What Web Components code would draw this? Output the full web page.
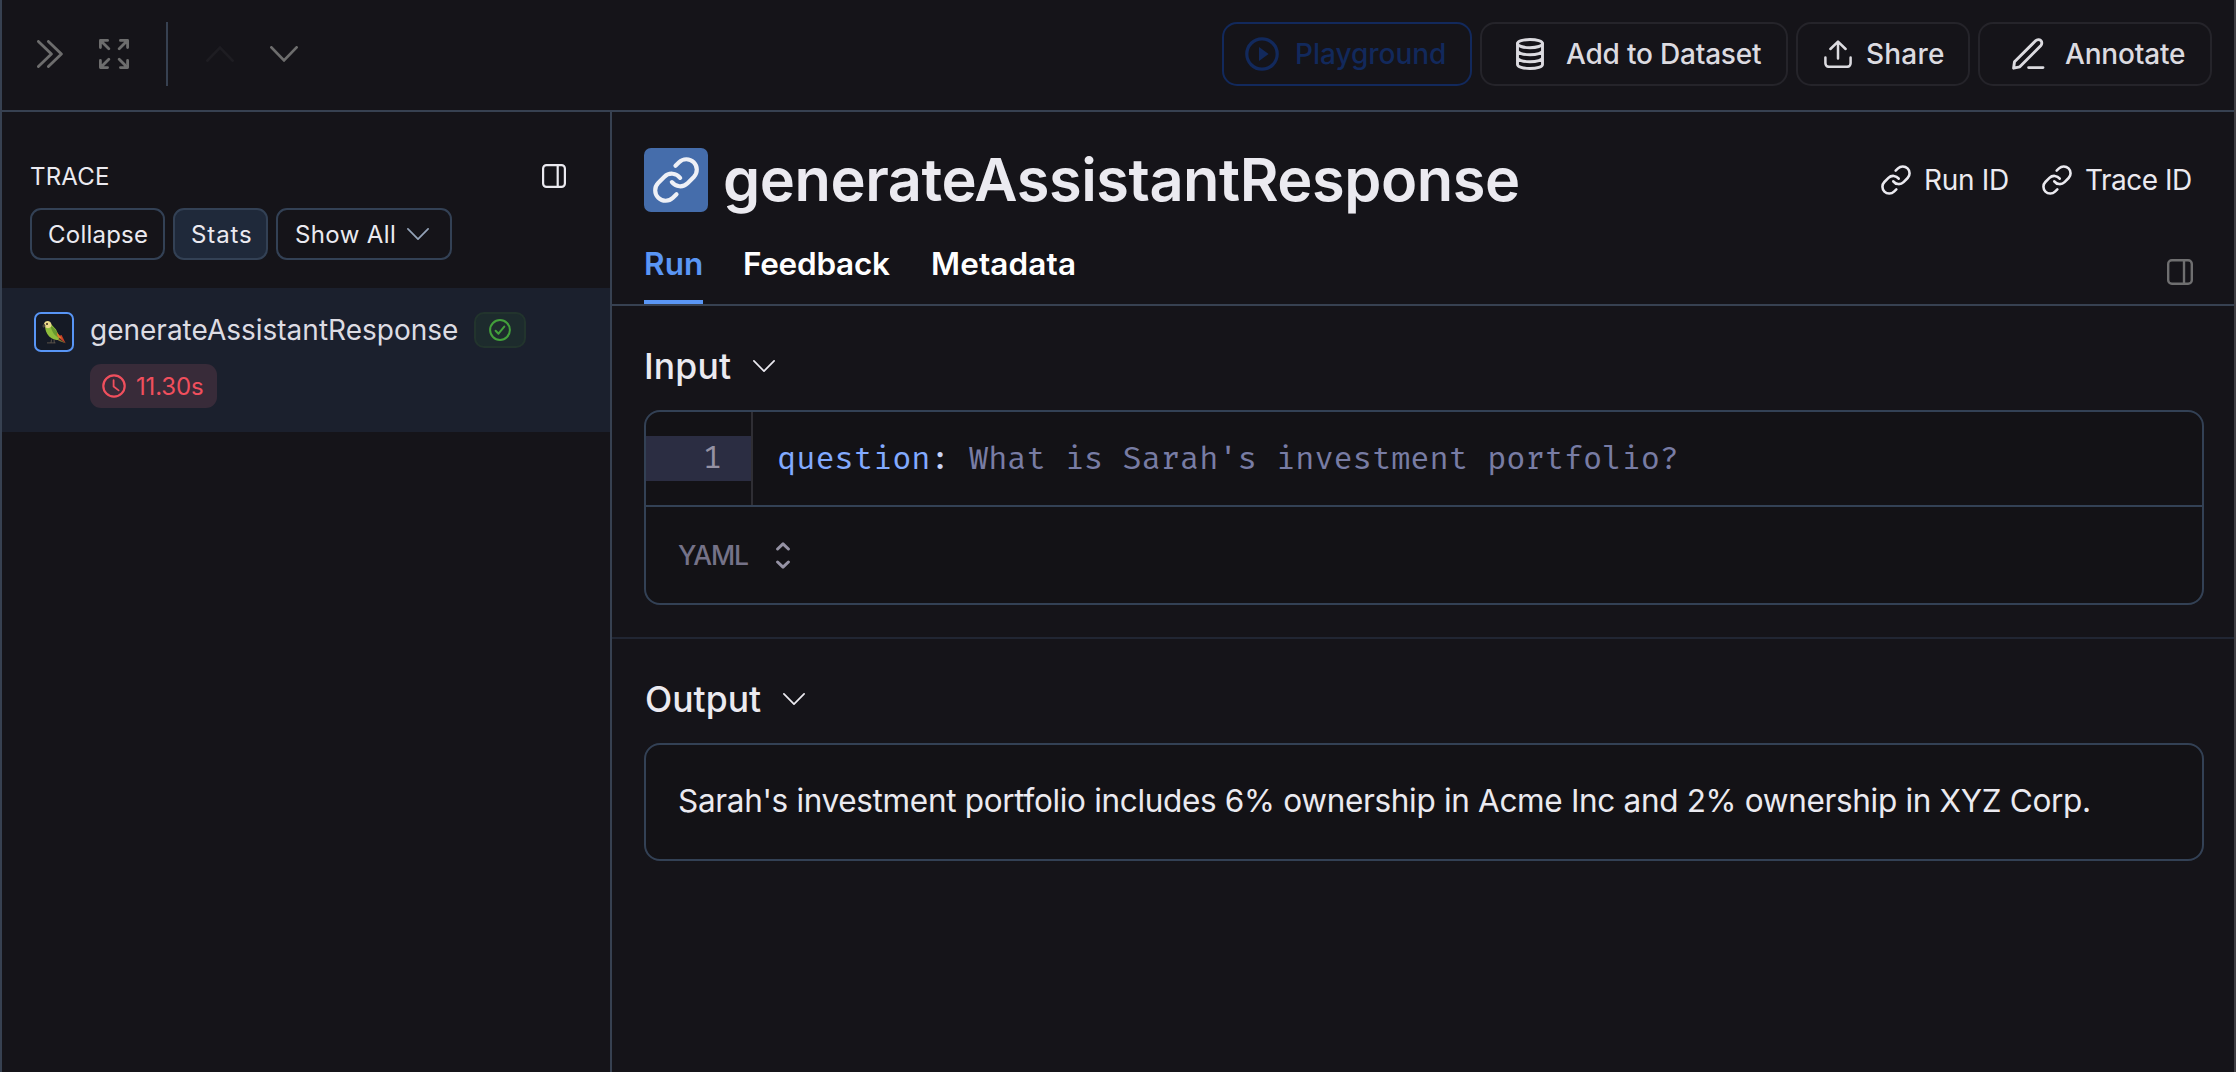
<!DOCTYPE html>
<html lang="en">
<head>
<meta charset="utf-8">
<title>Trace</title>
<style>
html,body{margin:0;height:100%;background:#151419}
body{font-family:Inter,"Liberation Sans",sans-serif;color:#ebeaf0;overflow:hidden}
</style>
</head>
<body>
<trace-app></trace-app>
<script>
const define = (name, html, setup) => {
  const t = document.createElement('template');
  t.innerHTML = html.trim();
  customElements.define(name, class extends HTMLElement {
    constructor() {
      super();
      this.attachShadow({ mode: 'open' }).append(t.content.cloneNode(true));
    }
    connectedCallback() { if (setup) setup(this, this.shadowRoot); }
  });
};

/* One line of text whose tracking is tuned so the ink spans exactly `w` pixels. */
const ctx = document.createElement('canvas').getContext('2d');
define('t-label', `<style>:host{display:block;flex:none;white-space:pre;line-height:1.2}:host([low]){padding-top:2px}</style><slot></slot>`, (el) => {
  const size = el.getAttribute('s'), weight = el.getAttribute('b') || 400, w = +el.getAttribute('w');
  const text = el.textContent;
  el.style.fontSize = size + 'px';
  el.style.fontWeight = weight;
  ctx.font = `${weight} ${size}px Inter, "Liberation Sans", sans-serif`;
  const m = ctx.measureText(text);
  const ink = m.actualBoundingBoxLeft + m.actualBoundingBoxRight;
  el.style.width = w + 'px';
  el.style.letterSpacing = (w - ink) / (text.length - 1) + 'px';
  el.style.textIndent = m.actualBoundingBoxLeft + 'px';
});

const stroke = (w, h, sw, body, vb) => `<svg width="${w}" height="${h}" viewBox="${vb || `0 0 ${w} ${h}`}" fill="none" stroke="currentColor" stroke-width="${sw}" stroke-linecap="round" stroke-linejoin="round">${body}</svg>`;
const link = (n, sw) => stroke(n, n, sw, '<path d="M10 13a5 5 0 0 0 7.54.54l3-3a5 5 0 0 0-7.07-7.07l-1.72 1.71"/><path d="M14 11a5 5 0 0 0-7.54-.54l-3 3a5 5 0 0 0 7.07 7.07l1.71-1.71"/>', '1 1 22 22');
const icons = {
  'chevrons-right': stroke(26, 28, 2.8, '<path d="M1.4 1.4 14.4 14 1.4 26.6M11.4 1.4 24.4 14 11.4 26.6"/>'),
  expand: stroke(30, 30, 2.8, '<path d="M1.4 8.6V1.4H8.6M1.8 1.8l8 8M21.4 1.4h7.2v7.2M28.2 1.8l-8 8M1.4 21.4v7.2h7.2M1.8 28.2l8-8M28.6 21.4v7.2h-7.2M28.2 28.2l-8-8"/>'),
  up: stroke(28, 16, 2.8, '<path d="M1.4 14.6 14 1.6 26.6 14.6"/>'),
  down: stroke(28, 16, 2.8, '<path d="M1.4 1.4 14 14.4 26.6 1.4"/>'),
  caret: stroke(22, 12, 1.7, '<path d="M.9 .9 11 11.2 21.1 .9"/>'),
  play: `<svg width="34" height="34" viewBox="0 0 34 34"><circle cx="17" cy="17" r="15.2" fill="none" stroke="currentColor" stroke-width="3.2"/><path d="M14 10v14l9.6-7z" fill="currentColor"/></svg>`,
  database: stroke(28, 32, 2.9, '<ellipse cx="14" cy="5.6" rx="12.5" ry="4.1"/><path d="M1.5 5.6v20.8c0 2.3 5.6 4.1 12.5 4.1s12.5-1.8 12.5-4.1V5.6M1.5 12.6c0 2.3 5.6 4.1 12.5 4.1s12.5-1.8 12.5-4.1M1.5 19.6c0 2.3 5.6 4.1 12.5 4.1s12.5-1.8 12.5-4.1"/>'),
  share: stroke(28, 28, 2.5, '<path d="M1.4 17.6v5.6a3.6 3.6 0 0 0 3.6 3.6h18a3.6 3.6 0 0 0 3.6-3.6v-5.6M14 18.6V2M6.4 9 14 1.6 21.6 9"/>'),
  pencil: stroke(33, 32, 2.9, '<path d="M16.6 29.6H31M1.6 30.2l.9-6.4L23.6 2.8c1.5-1.5 3.8-1.6 5.2-.3s1.3 3.7-.1 5.2L7.8 28.8z"/>'),
  link: link(30, 1.9),
  'link-lg': link(46, 2),
  panel: stroke(24, 24, 2.2, '<rect x="1.1" y="1.1" width="21.8" height="21.8" rx="3.4"/><path d="M15.7 1.1v21.8" stroke-linecap="butt"/>'),
  check: stroke(22, 22, 2, '<circle cx="11" cy="11" r="9.9"/><path d="M6.6 11.7 9.5 14.7 15.3 7.6"/>'),
  clock: stroke(24, 24, 2.2, '<circle cx="12" cy="12" r="10.7"/><path d="M11.6 6.2v6.3l5 3.9" stroke-width="1.8"/>'),
  updown: stroke(14, 27, 3, '<path d="M1.6 7 7 1.9 12.4 7M1.6 20 7 25.1 12.4 20"/>'),
  parrot: `<svg width="24" height="24" viewBox="0 0 24 24">
    <path d="M5 22.9h8.500M9.500 19.500l-.5 3.400M12 19.500l.3 3.400" stroke="#6b5f52" stroke-width=".8" fill="none"/>
    <path d="M15 16.500l8.600 6.800-4-8.300z" fill="#c63f26"/>
    <path d="M14 17l9.600 6.300-7-2.500z" fill="#8a7a35"/>
    <path d="M3.200 6.500C3 11 6 16.500 10 18.500c2.500 1.200 4.500 1.500 6 1.500l1.500-2.500L14 9.500 9 4z" fill="#8fbd3c"/>
    <path d="M8.500 6c3.500 1.300 5.500 4.500 7.500 7.800l3 4.500C14.500 18 10 13 8.500 6z" fill="#68982f"/>
    <path d="M15 12.500l5 6-3.500-.8c-1.300-1.500-1.800-3-1.500-5.200z" fill="#e0782c"/>
    <path d="M1.800 4.500C2.200 1.800 4.600.8 6.600 1.200 9.300 1.800 10 4.500 9 6.800 7.500 8.600 4.500 8.500 3 7z" fill="#ead98a"/>
    <path d="M2.600 3.700.6 5.200c-.3 1 .2 2 .8 2.600L3.700 6.200z" fill="#4f4a3e"/>
    <circle cx="5" cy="4.100" r="1" fill="#3a2418"/></svg>`
};
define('ui-icon', `<style>:host{display:flex;flex:none}svg{display:block}</style>`, (el, root) => {
  if (root.querySelector('svg')) return;
  root.innerHTML += icons[el.getAttribute('name')];
  const size = el.getAttribute('size');
  if (size) { const s = root.querySelector('svg'); s.setAttribute('width', size); s.setAttribute('height', size); }
});

define('tool-button', `
<style>
:host{display:flex;align-items:center;box-sizing:border-box;height:64px;border:2px solid #25242a;border-radius:15px;color:#dcdbe0;flex:none}
:host([accent]){border-color:#12295c;color:#12295c}
</style><slot></slot>`);

define('top-bar', `
<style>
:host{display:flex;align-items:center;justify-content:space-between;box-sizing:border-box;height:112px;padding:0 22px 2px 35px;border-bottom:2px solid #374151;color:#6d6d6d}
nav,div{display:flex;align-items:center}
div{gap:8px}
i{width:2px;height:64px;background:#374151;margin:0 38px 0 37px}
.off{color:#1e1d22;margin-right:36px}
tool-button{padding-left:var(--l)}
</style>
<nav><ui-icon name="chevrons-right" style="margin-right:36px"></ui-icon><ui-icon name="expand"></ui-icon><i></i><ui-icon class="off" name="up"></ui-icon><ui-icon name="down"></ui-icon></nav>
<div>
<tool-button accent style="width:250px;gap:18px;--l:21px"><ui-icon name="play"></ui-icon><t-label low s="28" b="550" w="148">Playground</t-label></tool-button>
<tool-button style="width:308px;gap:22px;--l:34px"><ui-icon name="database"></ui-icon><t-label low s="28" b="550" w="195">Add to Dataset</t-label></tool-button>
<tool-button style="width:174px;gap:15px;--l:26px"><ui-icon name="share"></ui-icon><t-label low s="28" b="550" w="77">Share</t-label></tool-button>
<tool-button style="width:234px;gap:20px;--l:32px"><ui-icon name="pencil"></ui-icon><t-label low s="28" b="550" w="120">Annotate</t-label></tool-button>
</div>`);

define('chip-button', `
<style>
:host{display:flex;align-items:center;box-sizing:border-box;height:52px;border:2px solid #334155;border-radius:11px;padding-left:17px;flex:none}
:host([on]){background:#1f293a}
</style><slot></slot>`);

define('run-row', `
<style>
:host{display:flex;box-sizing:border-box;height:144px;padding:24px 0 0 32px;background:#1b202d}
.av{display:flex;align-items:center;justify-content:center;box-sizing:border-box;width:40px;height:40px;border:2px solid #5895f5;border-radius:7px;background:#151a25;flex:none}
.col{margin-left:16px}
.line{display:flex;align-items:center;height:36px;gap:17px;padding-left:1px;color:#dddce3}
.ok{display:flex;align-items:center;justify-content:center;box-sizing:border-box;width:52px;height:36px;border:2px solid #22342d;border-radius:10px;background:#1d2b2d;color:#43a03b}
.time{display:flex;align-items:center;box-sizing:border-box;width:127px;height:44px;margin-top:16px;padding-left:12px;gap:11px;border-radius:11px;background:#382b39;color:#f04f5d}
</style>
<div class="av"><ui-icon name="parrot"></ui-icon></div>
<div class="col"><div class="line"><t-label low s="28" w="366">generateAssistantResponse</t-label><div class="ok"><ui-icon name="check"></ui-icon></div></div>
<div class="time"><ui-icon name="clock"></ui-icon><t-label low s="24" w="66">11.30s</t-label></div></div>`);

define('trace-sidebar', `
<style>
:host{display:flex;flex-direction:column;box-sizing:border-box;width:610px;padding-top:52px;border-right:2px solid #374151;flex:none}
.head{display:flex;align-items:center;justify-content:space-between;height:24px;padding:0 44px 0 29px}
.chips{display:flex;gap:8px;margin:20px 0 28px 28px}
.chips ui-icon{color:#94a3b8;margin-left:13px}
</style>
<div class="head"><t-label low s="24" w="77">TRACE</t-label><ui-icon name="panel"></ui-icon></div>
<div class="chips">
<chip-button style="width:135px"><t-label low s="24" w="98">Collapse</t-label></chip-button>
<chip-button on style="width:95px"><t-label low s="24" w="59">Stats</t-label></chip-button>
<chip-button style="width:176px;padding-left:18px"><t-label low s="24" w="98">Show All</t-label><ui-icon name="caret"></ui-icon></chip-button>
</div>
<run-row></run-row>`);

define('run-header', `
<style>
:host{display:block;padding:36px 32px 0;border-bottom:2px solid #374151}
.title{display:flex;align-items:center;height:64px}
.sq{display:flex;align-items:center;justify-content:center;width:64px;height:64px;border-radius:7px;background:#456dab;color:#eef0f6;margin-right:17px}
.ids{display:flex;align-items:center;margin:0 11px 0 auto}
.tabs{display:flex;height:92px}
.tab{display:flex;align-items:center;box-sizing:border-box;padding-bottom:8px;height:92px;padding-top:19px;color:#fff}
.tab.on{color:#5a96f5;border-bottom:4px solid #5a96f5;padding-bottom:4px;padding-left:2px;width:59px;margin-right:42px}
.tabs ui-icon{color:#6f6f70;margin:47px 9px 0 auto;height:26px}
</style>
<div class="title"><div class="sq"><ui-icon name="link-lg"></ui-icon></div><t-label s="59.5" b="600" w="793">generateAssistantResponse</t-label>
<div class="ids"><ui-icon name="link" style="margin-right:15px"></ui-icon><t-label low s="28" w="82">Run ID</t-label><ui-icon name="link" style="margin:0 14px 0 34px"></ui-icon><t-label low s="28" w="105">Trace ID</t-label></div></div>
<div class="tabs"><div class="tab on"><t-label s="31.5" b="600" w="56">Run</t-label></div><div class="tab"><t-label s="31.5" b="600" w="145">Feedback</t-label></div><div class="tab" style="margin-left:43px"><t-label s="31.5" b="600" w="141">Metadata</t-label></div><ui-icon name="panel" size="26"></ui-icon></div>`);

define('io-section', `
<style>
:host{display:block;padding:32px 30px 32px 32px}
header{display:flex;align-items:center;height:56px;margin-bottom:16px;gap:22px;padding-left:2px}
.card{box-sizing:border-box;border:2px solid #334155;border-radius:16px;background:#131216;overflow:hidden}
</style>
<header><slot name="title"></slot><ui-icon name="caret"></ui-icon></header>
<div class="card"><slot></slot></div>`);

define('code-view', `
<style>
:host{display:block}
.code{display:flex;height:93px;font:31.2px/45px "Fira Code","Noto Sans Mono","DejaVu Sans Mono","Liberation Mono",monospace;border-bottom:2px solid #334155;white-space:pre}
.gutter{box-sizing:border-box;width:107px;padding-top:24px;border-right:2px solid #2f2e34;color:#9592a4}
.gutter div{background:#2b2d42;text-align:right;padding:1px 29px 0 0;line-height:44px}
.text{padding:25px 0 0 24px;color:#787ca4}
b{font-weight:400;color:#82aaff}u{text-decoration:none;color:#c8d3f5}
.foot{display:flex;align-items:center;height:96px;padding-left:32px;gap:28px;color:#757288}
.foot ui-icon{color:#9592a4}
</style>
<div class="code"><div class="gutter"><div>1</div></div><div class="text"><b>question</b><u>:</u> What is Sarah's investment portfolio?</div></div>
<div class="foot"><t-label low s="26.5" b="500" w="70">YAML</t-label><ui-icon name="updown"></ui-icon></div>`);

define('trace-app', `
<style>
:host{display:flex;flex-direction:column;box-sizing:border-box;height:100vh;border-left:2px solid #374151;border-right:2px solid #403f44;background:#151419}
.body{display:flex;flex:1;min-height:0}
main{flex:1;min-width:0}
.rule{height:2px;background:#212633}
.answer{display:flex;align-items:center;height:112px;padding:0 0 2px 33px}
</style>
<top-bar></top-bar>
<div class="body"><trace-sidebar></trace-sidebar>
<main><run-header></run-header>
<io-section><t-label low slot="title" s="35.5" b="500" w="85">Input</t-label><code-view></code-view></io-section>
<div class="rule"></div>
<io-section><t-label low slot="title" s="35.5" b="500" w="115">Output</t-label><div class="answer"><t-label s="31.5" w="1410">Sarah's investment portfolio includes 6% ownership in Acme Inc and 2% ownership in XYZ Corp.</t-label></div></io-section>
</main></div>`);
</script>
</body>
</html>
